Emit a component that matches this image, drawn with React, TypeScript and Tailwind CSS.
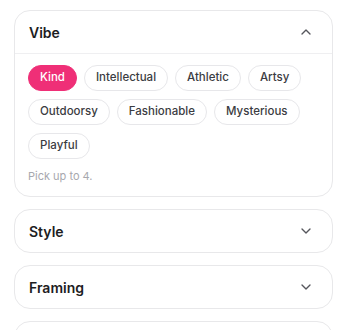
import { ChevronDown, ChevronUp } from "lucide-react";

const vibes = [
  "Kind",
  "Intellectual",
  "Athletic",
  "Artsy",
  "Outdoorsy",
  "Fashionable",
  "Mysterious",
  "Playful",
];

const Section = ({ title }: { title: string }) => {
  return (
    <div className="rounded-2xl border border-[#e8e8ea] bg-white">
      <div className="flex h-[42px] items-center justify-between pl-[14px] pr-[18px]">
        <span className="text-[14px] font-semibold text-[#1d1d22]">{title}</span>
        <ChevronDown size={16} strokeWidth={2} className="text-[#55565c]" />
      </div>
    </div>
  );
};

export default function App() {
  const selected = ["Kind"];
  return (
    <div
      className="flex h-[330px] w-[345px] flex-col gap-3 overflow-hidden bg-white pl-[14px] pr-3 pt-[10px]"
      style={{ fontFamily: "Inter, 'Noto Sans', sans-serif" }}
    >
      <div className="rounded-2xl border border-[#e8e8ea] bg-white">
        <div className="flex h-[43px] items-center justify-between border-b border-[#efeff1] pl-[14px] pr-[18px]">
          <span className="text-[14px] font-semibold text-[#1d1d22]">Vibe</span>
          <ChevronUp size={16} strokeWidth={2} className="text-[#55565c]" />
        </div>
        <div className="px-[13px] pb-[12px] pt-[11px]">
          <div className="flex flex-wrap gap-x-[7px] gap-y-2">
            {vibes.map((v) => (
              <span
                key={v}
                className={`flex h-[26px] items-center rounded-full px-[11px] text-[11.5px] font-medium ${
                  selected.includes(v)
                    ? "border border-[#ef2f77] bg-[#ef2f77] text-white"
                    : "border border-[#e7e7ea] bg-white text-[#3b3c42]"
                }`}
              >
                {v}
              </span>
            ))}
          </div>
          <div className="mt-[9px] text-[11px] leading-4 text-[#a7a8ae]">Pick up to 4.</div>
        </div>
      </div>
      <Section title="Style" />
      <Section title="Framing" />
      <div className="h-[44px] shrink-0 rounded-2xl border border-[#e8e8ea] bg-white" />
    </div>
  );
}
